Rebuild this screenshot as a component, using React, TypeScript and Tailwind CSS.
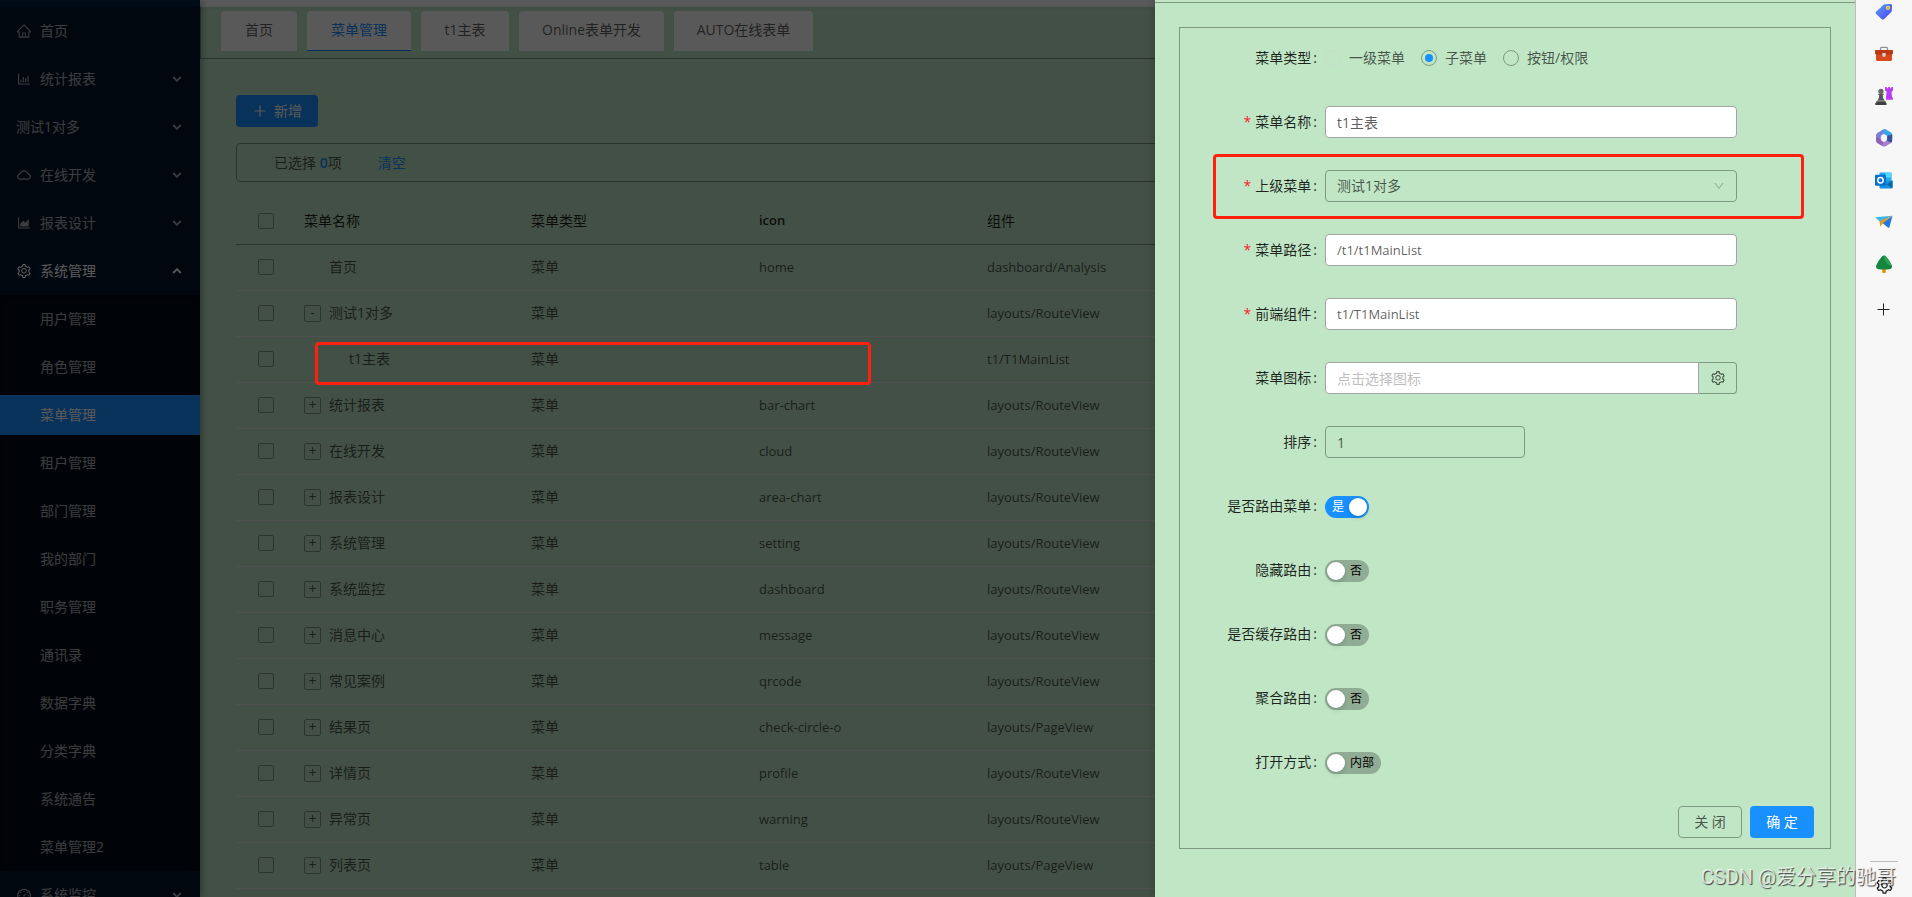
import React, { useState } from 'react';
import {
  AiOutlineAreaChart,
  AiOutlineBarChart,
  AiOutlineCloud,
  AiOutlineDashboard,
  AiOutlineDown,
  AiOutlineHome,
  AiOutlinePlus,
  AiOutlineSetting,
} from 'react-icons/ai';

interface MenuRow {
  name: string;
  icon: string;
  component: string;
  level?: number;
  expand?: '+' | '-';
}

const systemMenus = [
  '用户管理', '角色管理', '菜单管理', '租户管理', '部门管理', '我的部门',
  '职务管理', '通讯录', '数据字典', '分类字典', '系统通告', '菜单管理2',
];

const tabs = [
  { title: '首页', width: 'w-[76px]' },
  { title: '菜单管理', width: 'w-[104px]' },
  { title: 't1主表', width: 'w-[88px]' },
  { title: 'Online表单开发', width: 'w-[145px]' },
  { title: 'AUTO在线表单', width: 'w-[139px]' },
];

const rows: MenuRow[] = [
  { name: '首页', icon: 'home', component: 'dashboard/Analysis' },
  { name: '测试1对多', icon: '', component: 'layouts/RouteView', expand: '-' },
  { name: 't1主表', icon: '', component: 't1/T1MainList', level: 1 },
  { name: '统计报表', icon: 'bar-chart', component: 'layouts/RouteView', expand: '+' },
  { name: '在线开发', icon: 'cloud', component: 'layouts/RouteView', expand: '+' },
  { name: '报表设计', icon: 'area-chart', component: 'layouts/RouteView', expand: '+' },
  { name: '系统管理', icon: 'setting', component: 'layouts/RouteView', expand: '+' },
  { name: '系统监控', icon: 'dashboard', component: 'layouts/RouteView', expand: '+' },
  { name: '消息中心', icon: 'message', component: 'layouts/RouteView', expand: '+' },
  { name: '常见案例', icon: 'qrcode', component: 'layouts/RouteView', expand: '+' },
  { name: '结果页', icon: 'check-circle-o', component: 'layouts/PageView', expand: '+' },
  { name: '详情页', icon: 'profile', component: 'layouts/RouteView', expand: '+' },
  { name: '异常页', icon: 'warning', component: 'layouts/RouteView', expand: '+' },
  { name: '列表页', icon: 'table', component: 'layouts/PageView', expand: '+' },
];

const Arrow: React.FC<{ up?: boolean }> = ({ up }) => (
  <svg className="ml-auto" width="10" height="8" viewBox="0 0 10 8" fill="none" stroke="currentColor" strokeWidth="1.8">
    <path d={up ? 'M1.2 6 5 2.2 8.8 6' : 'M1.2 2 5 5.8 8.8 2'} />
  </svg>
);

interface SideItemProps {
  icon?: React.ReactNode;
  title: string;
  leaf?: boolean;
  open?: boolean;
}

const SideItem: React.FC<SideItemProps> = ({ icon, title, leaf, open }) => (
  <div className="py-1">
    <a href="#" className={`flex h-10 items-center pr-[18px] pl-4 ${open ? 'text-white' : 'text-white/65'}`}>
      {icon && <span className="mr-2 text-base">{icon}</span>}
      <span>{title}</span>
      {!leaf && <Arrow up={open} />}
    </a>
  </div>
);

const Sidebar: React.FC = () => (
  <nav className="z-10 w-[200px] shrink-0 bg-[#001529] shadow-[2px_0_6px_rgba(0,21,41,0.35)]">
    <div className="h-[7px] bg-[#002140]" />
    <SideItem icon={<AiOutlineHome />} title="首页" leaf />
    <SideItem icon={<AiOutlineBarChart />} title="统计报表" />
    <SideItem title="测试1对多" />
    <SideItem icon={<AiOutlineCloud />} title="在线开发" />
    <SideItem icon={<AiOutlineAreaChart />} title="报表设计" />
    <SideItem icon={<AiOutlineSetting />} title="系统管理" open />
    <ul className="bg-[#000c17] shadow-[inset_0_2px_8px_rgba(0,0,0,0.45)]">
      {systemMenus.map((menu) => (
        <li key={menu} className="py-1">
          <a
            href="#"
            className={`flex h-10 items-center pl-10 ${menu === '菜单管理' ? 'bg-[#1890ff] text-white' : 'text-white/65'}`}
          >
            {menu}
          </a>
        </li>
      ))}
    </ul>
    <SideItem icon={<AiOutlineDashboard />} title="系统监控" />
  </nav>
);

const Check: React.FC<{ label: string }> = ({ label }) => (
  <input
    type="checkbox"
    aria-label={label}
    className="block size-4 appearance-none rounded-xs border border-[#7f9882] checked:bg-[#1890ff]"
  />
);

const MenuTable: React.FC = () => (
  <table className="mt-4 w-full table-fixed text-left text-black/65">
    <colgroup>
      <col className="w-[60px]" />
      <col className="w-[227px]" />
      <col className="w-[228px]" />
      <col className="w-[228px]" />
      <col className="w-[228px]" />
      <col />
    </colgroup>
    <thead>
      <tr className="h-[46px] border-b border-[#7f9882] text-black/85">
        <th className="pl-[22px]"><Check label="全选" /></th>
        <th className="px-2 font-normal">菜单名称</th>
        <th className="px-2 font-normal">菜单类型</th>
        <th className="px-2 text-[13px] font-semibold">icon</th>
        <th className="px-2 font-normal">组件</th>
        <th />
      </tr>
    </thead>
    <tbody>
      {rows.map((row) => (
        <tr key={row.name} className="h-[46px] border-b border-[#e8e8e8]">
          <td className="pl-[22px]"><Check label={row.name} /></td>
          <td className="px-2">
            <div className={`flex items-center gap-2 ${row.level ? 'pl-5' : ''}`}>
              {row.expand ? (
                <button className="size-[17px] rounded-xs border border-[#7f9882] text-center leading-[14px]">
                  {row.expand}
                </button>
              ) : (
                <span className="size-[17px]" />
              )}
              <span>{row.name}</span>
            </div>
          </td>
          <td className="px-2">菜单</td>
          <td className="px-2 text-[13px]">{row.icon}</td>
          <td className="px-2 text-[13px]">{row.component}</td>
          <td />
        </tr>
      ))}
    </tbody>
  </table>
);

const MenuPage: React.FC = () => (
  <main className="min-w-0 flex-1">
    <div className="h-[7px] bg-white shadow-[0_1px_4px_rgba(0,21,41,0.08)]" />
    <div className="flex h-[52px] gap-2.5 border-b border-l border-[#7f9882] pt-1 pl-5">
      {tabs.map((tab) => (
        <button
          key={tab.title}
          className={`h-10 rounded-t bg-white pb-0.5 ${tab.width} ${tab.title === '菜单管理' ? 'border-b border-[#1890ff] text-[#1890ff]' : 'text-black/65'}`}
        >
          {tab.title}
        </button>
      ))}
    </div>
    <div className="px-9 pt-9">
      <button className="flex h-8 items-center gap-1.5 rounded bg-[#1890ff] px-4 text-white">
        <AiOutlinePlus className="text-base" />
        新增
      </button>
      <div className="mt-4 flex h-[39px] items-center gap-9 rounded border border-[#7f9882] pl-[37px] text-black/65">
        <span>
          已选择 <a href="#" className="font-semibold text-[#1890ff]">0</a>项
        </span>
        <a href="#" className="text-[#1890ff]">清空</a>
      </div>
      <MenuTable />
    </div>
  </main>
);

interface FormItemProps {
  label: string;
  htmlFor?: string;
  required?: boolean;
  marked?: boolean;
  children: React.ReactNode;
}

const FormItem: React.FC<FormItemProps> = ({ label, htmlFor, required, marked, children }) => (
  <div className="relative flex h-8 items-center">
    <label htmlFor={htmlFor} className="w-[145px] shrink-0 pr-2 text-right text-black/85">
      {required && <span className="mr-1 text-[#f5222d]">*</span>}
      {label}
      <span className="ml-0.5">:</span>
    </label>
    {children}
    {marked && <div className="pointer-events-none absolute -top-4 right-[26px] -bottom-[17px] left-[33px] rounded-sm border-3 border-[#ff2010]" />}
  </div>
);

interface SwitchProps {
  id: string;
  on: string;
  off: string;
  defaultChecked?: boolean;
}

const Switch: React.FC<SwitchProps> = ({ id, on, off, defaultChecked = false }) => {
  const [checked, setChecked] = useState(defaultChecked);
  return (
    <label
      className={`relative mt-0.5 flex h-[22px] min-w-11 cursor-pointer items-center gap-[5px] rounded-full px-0.5 text-xs ${checked ? 'flex-row-reverse bg-[#1890ff] text-white' : 'bg-[#91ac95] text-black'}`}
    >
      <input id={id} type="checkbox" role="switch" className="sr-only" checked={checked} onChange={() => setChecked(!checked)} />
      <span className="size-[18px] rounded-full bg-white shadow-[0_2px_4px_rgba(0,35,11,0.2)]" />
      <span className={checked ? 'ml-[5px]' : 'mr-[5px]'}>{checked ? on : off}</span>
    </label>
  );
};

const inputClass = 'h-8 rounded border border-[#a3a3a3] bg-white px-[11px] text-black/65 outline-none placeholder:text-[#bfbfbf]';
const menuTypes = ['一级菜单', '子菜单', '按钮/权限'];

const MenuDrawer: React.FC = () => {
  const [menuType, setMenuType] = useState('子菜单');
  const [form, setForm] = useState({ name: 't1主表', url: '/t1/t1MainList', component: 't1/T1MainList', icon: '', sort: '1' });

  const handleChange = (e: React.ChangeEvent<HTMLInputElement>) => {
    setForm({ ...form, [e.target.name]: e.target.value });
  };

  return (
    <section className="absolute inset-y-0 right-0 z-30 w-[700px] overflow-hidden bg-[#c1e6c6] shadow-[-2px_0_8px_rgba(0,0,0,0.15)]">
      <div className="h-[3px] border-b border-[#7f9882]" />
      <div className="m-6 border border-[#7f9882] pt-3.5 pb-2.5">
        <form className="flex flex-col gap-8" onSubmit={(e) => e.preventDefault()}>
          <FormItem label="菜单类型">
            <div className="flex gap-4">
              {menuTypes.map((type) => (
                <label key={type} className="flex items-center gap-2 text-black/65">
                  <input
                    type="radio"
                    name="menuType"
                    checked={menuType === type}
                    onChange={() => setMenuType(type)}
                    className={`flex size-4 appearance-none items-center justify-center rounded-full border checked:before:size-2 checked:before:rounded-full checked:before:bg-[#1890ff] ${type === '一级菜单' ? 'border-[#c9dccb]' : 'border-[#7f9882]'}`}
                  />
                  {type}
                </label>
              ))}
            </div>
          </FormItem>
          <FormItem label="菜单名称" htmlFor="name" required>
            <input id="name" name="name" value={form.name} onChange={handleChange} className={`w-[412px] ${inputClass}`} />
          </FormItem>
          <FormItem label="上级菜单" htmlFor="parent" required marked>
            <div className="relative w-[412px]">
              <select id="parent" className="h-8 w-full appearance-none rounded border border-[#7f9882] px-[11px] text-black/65 outline-none">
                <option>测试1对多</option>
              </select>
              <AiOutlineDown className="pointer-events-none absolute top-2.5 right-3 text-xs text-black/25" />
            </div>
          </FormItem>
          <FormItem label="菜单路径" htmlFor="url" required>
            <input id="url" name="url" value={form.url} onChange={handleChange} className={`w-[412px] text-[13px] ${inputClass}`} />
          </FormItem>
          <FormItem label="前端组件" htmlFor="component" required>
            <input id="component" name="component" value={form.component} onChange={handleChange} className={`w-[412px] text-[13px] ${inputClass}`} />
          </FormItem>
          <FormItem label="菜单图标" htmlFor="icon">
            <div className="flex w-[412px]">
              <input
                id="icon"
                name="icon"
                placeholder="点击选择图标"
                value={form.icon}
                onChange={handleChange}
                className={`min-w-0 flex-1 rounded-r-none ${inputClass}`}
              />
              <button type="button" aria-label="选择图标" className="flex h-8 w-[38px] items-center justify-center rounded-r border border-l-0 border-[#7f9882] text-black/65">
                <AiOutlineSetting className="text-base" />
              </button>
            </div>
          </FormItem>
          <FormItem label="排序" htmlFor="sort">
            <input id="sort" name="sort" value={form.sort} onChange={handleChange} className="h-8 w-[200px] rounded border border-[#7f9882] px-[11px] text-black/65 outline-none" />
          </FormItem>
          <FormItem label="是否路由菜单" htmlFor="route">
            <Switch id="route" on="是" off="否" defaultChecked />
          </FormItem>
          <FormItem label="隐藏路由" htmlFor="hidden">
            <Switch id="hidden" on="是" off="否" />
          </FormItem>
          <FormItem label="是否缓存路由" htmlFor="keepAlive">
            <Switch id="keepAlive" on="是" off="否" />
          </FormItem>
          <FormItem label="聚合路由" htmlFor="alwaysShow">
            <Switch id="alwaysShow" on="是" off="否" />
          </FormItem>
          <FormItem label="打开方式" htmlFor="openType">
            <Switch id="openType" on="外部" off="内部" />
          </FormItem>
        </form>
        <div className="mt-7 flex justify-end gap-2 pr-4">
          <button className="h-8 w-16 rounded border border-[#7f9882] text-black/65">关 闭</button>
          <button className="h-8 w-16 rounded bg-[#1890ff] text-white">确 定</button>
        </div>
      </div>
    </section>
  );
};

const TagIcon = () => (
  <svg width="18" height="18" viewBox="0 0 18 18">
    <defs>
      <linearGradient id="tag" x1="0" y1="0" x2="1" y2="1">
        <stop offset="0" stopColor="#5ba4f5" />
        <stop offset="1" stopColor="#4a3df0" />
      </linearGradient>
    </defs>
    <path d="M10 1.3 15.5 1c1 0 1.7.7 1.6 1.7l-.3 5.2c0 .6-.3 1-.7 1.4l-7 6.600c-.8.8-1.800.8-2.600 0L1.200 11c-.8-.8-.7-1.900.1-2.600l7-6.500c.5-.4 1-.6 1.700-.6Z" fill="url(#tag)" />
    <circle cx="13" cy="4.8" r="1.5" fill="#7d8fae" stroke="#ffd83d" strokeWidth="1.2" />
  </svg>
);

const ToolboxIcon = () => (
  <svg width="18" height="18" viewBox="0 0 18 18">
    <path d="M5.5 5V3.600c0-.8.5-1.300 1.300-1.300h4.400c.8 0 1.300.5 1.300 1.300V5" fill="none" stroke="#8f8f8f" strokeWidth="1.3" />
    <path d="M1 9h16v5.500c0 .9-.6 1.500-1.500 1.500h-13C1.600 16 1 15.400 1 14.500Z" fill="#d9481c" />
    <path d="M.8 5h16.400c.5 0 .8.4.8.9V8c0 1-.7 1.600-1.600 1.600H1.600C.7 9.600 0 9 0 8V5.900C0 5.400.3 5 .8 5Z" fill="#b93a10" />
    <path d="M7.300 8h3.400v2.300a1.700 1.700 0 0 1-3.400 0Z" fill="#d4d4d4" />
  </svg>
);

const ChessIcon = () => (
  <svg width="18" height="18" viewBox="0 0 18 18">
    <path d="M10 0h1.700v1.300h1.400V0h1.800v1.300h1.400V0H18v3.600l-1.500 1.200.5 5.200.9.8v2H11V10l.6-5.200L10 3.600Z" fill="#b83cf5" />
    <circle cx="6" cy="4.300" r="2.600" fill="#666" />
    <path d="M3.300 6.700h5.400v1.400h-.9c0 2.600.6 4 2.100 5.700H2.100C3.600 12.100 4.200 10.700 4.200 8.100h-.9Z" fill="#555" />
    <path d="M1.300 14.200h9.400v1.200c.5 0 .8.4.8.900V18H.3v-1.700c0-.5.400-.9 1-.9Z" fill="#404040" />
  </svg>
);

// three folded bands round an open centre
const OfficeIcon = () => (
  <svg width="18" height="18" viewBox="0 0 18 18">
    <path d="M8.500.3 3 3.600C1.700 4.400 1 5.500 1 6.900v5.600l4.800-1.700V8c0-.9.4-1.500 1.100-2l3.600-2.300Z" fill="#7b7fd8" />
    <path d="M8.500.3c.9-.4 1.700-.4 2.500.1l5 3c.8.5 1.200 1.200 1.200 2.100v4.300L12 6.700 8.800 4.900C7.300 4 7.300 1.500 8.500.3Z" fill="#3ca7e8" />
    <path d="M17.200 5.500v6.300c0 1-.4 1.800-1.200 2.300l-4.800-2.400c.6-.4.9-.9.900-1.600V6.700Z" fill="#37549f" />
    <path d="M16 14.100 11 17c-1.300.8-2.500.8-3.800 0L4.500 15.200l4.200-2.200c.9-.4 1.700-.8 2.500-1.300Z" fill="#ad7ccd" />
    <path d="M1 8v3.600c0 1 .4 1.800 1.200 2.300l4.300 2.700 2.200-3.600-1.800-1.100c-.7-.5-1.100-1-1.100-1.900Z" fill="#8b63bd" />
  </svg>
);

const OutlookIcon = () => (
  <svg width="18" height="18" viewBox="0 0 18 18">
    <path d="M4.500 1.500h11.300c.4 0 .7.3.7.7v9h-12Z" fill="#28a8ea" />
    <path d="M10.500 1.500h5.300c.4 0 .7.3.7.7v4.300h-6Z" fill="#50d9ff" />
    <path d="M4.500 10h7l6-.5v7c0 .5-.4 1-1 1h-11c-.5 0-1-.5-1-1Z" fill="#1490df" />
    <path d="m17.500 9.500-6 4 6 3.500Z" fill="#0a64ad" />
    <rect x="0" y="3.800" width="11" height="11" rx="1" fill="#0a72cc" />
    <circle cx="5.500" cy="9.300" r="2.700" fill="none" stroke="#fff" strokeWidth="1.500" />
  </svg>
);

const PlaneIcon = () => (
  <svg width="18" height="18" viewBox="0 0 18 18">
    <path d="M.3 4.300 17.300 2.800 5 8.800Z" fill="#38b5f2" />
    <path d="M17.300 2.800 4.500 8.300l.8 5.400 2.400-3.200Z" fill="#e79a12" />
    <path d="m17.500 2.800-9.800 7.500 5.500 4.400c.5.300 1 .1 1.200-.5Z" fill="#2475dc" />
  </svg>
);

const TreeIcon = () => (
  <svg width="18" height="18" viewBox="0 0 18 18">
    <path d="M7.200 13h3.600v4.200c0 .5-.3.8-.8.8H8c-.5 0-.8-.3-.8-.8Z" fill="#e8930c" />
    <path d="M7.200 1.300c1-1.200 2.600-1.200 3.600 0 2.600 3 4.700 6 6 9.300.7 1.900-.3 3.400-2.300 3.600-3.700.4-7.300.4-11 0-2-.2-3-1.700-2.300-3.600 1.300-3.300 3.400-6.300 6-9.300Z" fill="#14863f" />
    <path d="M9 .4c.7 0 1.300.3 1.800.9 2.600 3 4.700 6 6 9.300-4.300-.4-7.800-4-7.800-10.200Z" fill="#2ba353" />
  </svg>
);

const browserIcons = [TagIcon, ToolboxIcon, ChessIcon, OfficeIcon, OutlookIcon, PlaneIcon, TreeIcon];

const BrowserBar: React.FC = () => (
  <aside className="flex w-[57px] shrink-0 flex-col items-center gap-6 border-l border-[#bdbdbd] bg-[#f7f7f7] pt-[3px] pb-0.5">
    {browserIcons.map((Icon, i) => (
      <button key={i}><Icon /></button>
    ))}
    <button className="mt-1" aria-label="添加">
      <svg width="18" height="18" viewBox="0 0 18 18" stroke="#222" strokeWidth="1">
        <path d="M8.500 2.500v12M2.500 8.500h12" />
      </svg>
    </button>
    <div className="mt-auto flex flex-col items-center gap-3.5">
      <div className="h-px w-7 bg-[#bdbdbd]" />
      <button aria-label="设置"><AiOutlineSetting className="size-[19px] text-[#1b1b1b]" /></button>
    </div>
  </aside>
);

const App: React.FC = () => (
  <div className="relative flex h-screen overflow-hidden bg-[#c1e6c6] font-['Open_Sans','Noto_Sans_CJK_SC',sans-serif] text-sm">
    <div className="relative flex min-w-0 flex-1 overflow-hidden">
      <Sidebar />
      <MenuPage />
      <div className="absolute inset-0 z-20 bg-black/65" />
      <div className="pointer-events-none absolute top-[342px] left-[315px] z-20 h-[43px] w-[556px] rounded-sm border-3 border-[#ff2010]" />
      <MenuDrawer />
    </div>
    <BrowserBar />
    <div className="pointer-events-none absolute right-4 bottom-1.5 z-40 font-['Roboto','Noto_Sans_CJK_SC',sans-serif] text-xl text-white/75 [text-shadow:1px_1px_1px_rgba(0,0,0,0.7)]">
      CSDN @爱分享的驰哥
    </div>
  </div>
);

export default App;
